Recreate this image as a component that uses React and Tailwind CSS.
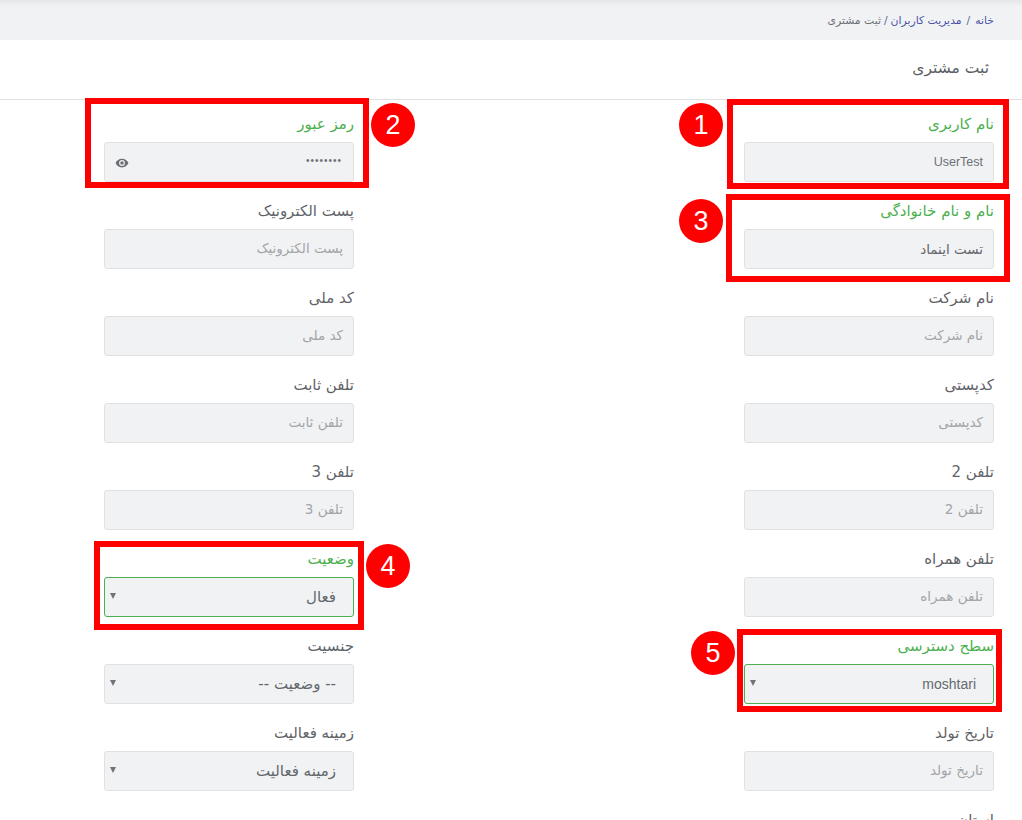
const FONT = "font-['DejaVu_Sans',sans-serif]";

const right = [
  { label: "نام کاربری", value: "UserTest", green: true, latin: true },
  { label: "نام و نام خانوادگی", value: "تست اینماد", green: true },
  { label: "نام شرکت", ph: "نام شرکت" },
  { label: "کدپستی", ph: "کدپستی" },
  { label: "تلفن 2", ph: "تلفن 2" },
  { label: "تلفن همراه", ph: "تلفن همراه" },
  { label: "سطح دسترسی", select: "moshtari", green: true, active: true, latin: true },
  { label: "تاریخ تولد", ph: "تاریخ تولد" },
  { label: "استان", ph: "استان" },
];
const left = [
  { label: "رمز عبور", password: true, green: true },
  { label: "پست الکترونیک", ph: "پست الکترونیک" },
  { label: "کد ملی", ph: "کد ملی" },
  { label: "تلفن ثابت", ph: "تلفن ثابت" },
  { label: "تلفن 3", ph: "تلفن 3" },
  { label: "وضعیت", select: "فعال", green: true, active: true },
  { label: "جنسیت", select: "-- وضعیت --" },
  { label: "زمینه فعالیت", select: "زمینه فعالیت" },
];

function Eye() {
  return (
    <svg width="14" height="14" viewBox="0 0 24 24" className="text-[#6b6f75]">
      <path fill="currentColor" d="M12 4.5C7 4.5 2.7 7.6 1 12c1.7 4.4 6 7.500 11 7.500s9.300-3.100 11-7.500c-1.700-4.400-6-7.500-11-7.500zm0 12.500a5 5 0 1 1 0-10 5 5 0 0 1 0 10zm0-8a3 3 0 1 0 0 6 3 3 0 0 0 0-6z" />
    </svg>
  );
}

function Field({ f }) {
  const box = `relative flex h-10 w-[250px] items-center rounded-[3px] border bg-[#f1f2f4] text-[13.5px] ${f.active ? "border-[#4caf50]" : "border-[#dfe1e3]"}`;
  return (
    <div className="w-[250px]">
      <div className={`flex h-[42px] items-start pt-[13px] text-[15px] leading-[22px] ${f.green ? "text-[#4caf50]" : "text-[#5f6368]"}`}>
        {f.label}
      </div>
      {f.select ? (
        <div className={box}>
          <span className={`pr-[17px] ${f.latin ? "font-['Liberation_Sans',sans-serif] text-[14px] text-[#666a70]" : "text-[15px] text-[#63676c]"}`}>{f.select}</span>
          <span className="absolute left-[5px] top-[15px] h-0 w-0 border-x-[3px] border-t-[6px] border-x-transparent border-t-[#6f7276]" />
        </div>
      ) : f.password ? (
        <div className={box}>
          <span className="pb-[3px] pr-[11px] font-['Liberation_Sans',sans-serif] text-[10px] leading-none tracking-[1px] text-[#6d7076]">••••••••</span>
          <span className="absolute left-[10px] top-[13px] flex"><Eye /></span>
        </div>
      ) : (
        <div className={box}>
          <span className={`pr-[10px] ${f.value ? (f.latin ? "font-['Liberation_Sans',sans-serif] text-[12.500px] text-[#6d7076]" : "text-[#63676c]") : "pb-[2px] text-[#a3a5a8]"}`}>
            {f.value || f.ph}
          </span>
        </div>
      )}
    </div>
  );
}

function Frame({ className }) {
  return <div className={`absolute border-[6px] border-[#ff0000] ${className}`} />;
}
function Badge({ n, className }) {
  return (
    <div className={`absolute flex h-11 w-11 items-center justify-center rounded-full bg-[#ff0000] font-['Liberation_Sans',sans-serif] text-[27px] text-white ${className}`}>
      {n}
    </div>
  );
}

export default function App() {
  return (
    <div dir="rtl" className={`relative h-[820px] w-full overflow-hidden bg-white ${FONT}`}>
      <div className="h-10 bg-gradient-to-b from-[#e5e6e8] to-[#f1f2f4] to-[15%] pr-[28px] pt-[12px] text-[10.800px] leading-[18px] text-[#5f6a9a]">
        <span className="text-[#4a52a8]">خانه</span>
        <span className="mx-[5px]">/</span>
        <span className="text-[#4a52a8]">مدیریت کاربران</span>
        <span className="mx-[3px]">/</span>
        <span className="text-[#6b6f75]">ثبت مشتری</span>
      </div>
      <div className="flex h-[60px] items-center border-b border-[#dfe0e2] pr-[33px] pb-[2px] text-[15.500px] text-[#5a5e63]">
        ثبت مشتری
      </div>
      <div className="grid grid-cols-[640px_1fr] pr-[28px]">
        <div>
          {right.map((f) => (
            <div key={f.label} className="h-[87px]"><Field f={f} /></div>
          ))}
        </div>
        <div>
          {left.map((f) => (
            <div key={f.label} className="h-[87px]"><Field f={f} /></div>
          ))}
        </div>
      </div>

      <Frame className="left-[727px] top-[99px] h-[90px] w-[282px]" />
      <Frame className="left-[726px] top-[194px] h-[88px] w-[284px]" />
      <Frame className="left-[85px] top-[98px] h-[90px] w-[284px]" />
      <Frame className="left-[94px] top-[541px] h-[89px] w-[270px]" />
      <Frame className="left-[737px] top-[629px] h-[83px] w-[265px]" />
      <Badge n="1" className="left-[679px] top-[103px]" />
      <Badge n="3" className="left-[679px] top-[199px]" />
      <Badge n="2" className="left-[371px] top-[103px]" />
      <Badge n="4" className="left-[366px] top-[544px]" />
      <Badge n="5" className="left-[691px] top-[631px]" />
    </div>
  );
}
